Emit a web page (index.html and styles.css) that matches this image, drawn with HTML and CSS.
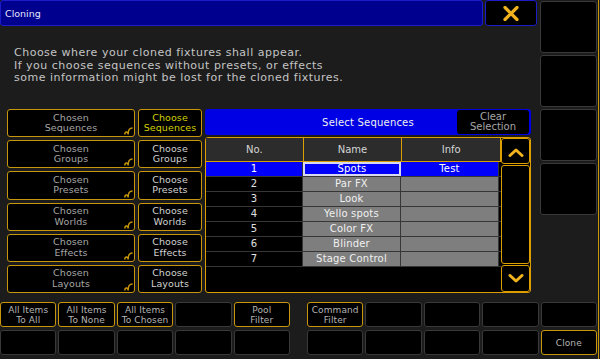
FILE: index.html
```html
<!DOCTYPE html>
<html lang="en">
<head>
  <meta charset="UTF-8">
  <title>Cloning</title>
  <link rel="stylesheet" href="styles.css">
</head>
<body>
  <div class="screen">
    <div class="top">
      <div class="main">
        <!-- Title bar -->
        <div class="titlebar">
          <div class="title">Cloning</div>
          <div class="close">
            <svg width="16" height="15" viewBox="0 0 16 15">
              <path d="M2 1.5 L14 13.5 M14 1.5 L2 13.5" stroke="#f0b21e" stroke-width="3.2" stroke-linecap="round"/>
            </svg>
          </div>
        </div>

        <p class="intro">
          Choose where your cloned fixtures shall appear.<br>
          If you choose sequences without presets, or effects<br>
          some information might be lost for the cloned fixtures.
        </p>

        <div class="content">
          <div class="sources">
            <div class="src-row">
              <div class="chosen">Chosen<br>Sequences<svg class="curl" width="9" height="8" viewBox="0 0 9 8"><path d="M0.8 7.6 C0.8 4.4 3.8 4.2 4.1 7 M4.1 7.6 C4.1 3 5.2 1 8.6 1" fill="none" stroke="#c8960c" stroke-width="1.5"/></svg></div>
              <div class="choose active">Choose<br>Sequences</div>
            </div>
            <div class="src-row">
              <div class="chosen">Chosen<br>Groups<svg class="curl" width="9" height="8" viewBox="0 0 9 8"><path d="M0.8 7.6 C0.8 4.4 3.8 4.2 4.1 7 M4.1 7.6 C4.1 3 5.2 1 8.6 1" fill="none" stroke="#c8960c" stroke-width="1.5"/></svg></div>
              <div class="choose">Choose<br>Groups</div>
            </div>
            <div class="src-row">
              <div class="chosen">Chosen<br>Presets<svg class="curl" width="9" height="8" viewBox="0 0 9 8"><path d="M0.8 7.6 C0.8 4.4 3.8 4.2 4.1 7 M4.1 7.6 C4.1 3 5.2 1 8.6 1" fill="none" stroke="#c8960c" stroke-width="1.5"/></svg></div>
              <div class="choose">Choose<br>Presets</div>
            </div>
            <div class="src-row">
              <div class="chosen">Chosen<br>Worlds<svg class="curl" width="9" height="8" viewBox="0 0 9 8"><path d="M0.8 7.6 C0.8 4.4 3.8 4.2 4.1 7 M4.1 7.6 C4.1 3 5.2 1 8.6 1" fill="none" stroke="#c8960c" stroke-width="1.5"/></svg></div>
              <div class="choose">Choose<br>Worlds</div>
            </div>
            <div class="src-row">
              <div class="chosen">Chosen<br>Effects<svg class="curl" width="9" height="8" viewBox="0 0 9 8"><path d="M0.8 7.6 C0.8 4.4 3.8 4.2 4.1 7 M4.1 7.6 C4.1 3 5.2 1 8.6 1" fill="none" stroke="#c8960c" stroke-width="1.5"/></svg></div>
              <div class="choose">Choose<br>Effects</div>
            </div>
            <div class="src-row">
              <div class="chosen">Chosen<br>Layouts<svg class="curl" width="9" height="8" viewBox="0 0 9 8"><path d="M0.8 7.6 C0.8 4.4 3.8 4.2 4.1 7 M4.1 7.6 C4.1 3 5.2 1 8.6 1" fill="none" stroke="#c8960c" stroke-width="1.5"/></svg></div>
              <div class="choose">Choose<br>Layouts</div>
            </div>
          </div>

          <div class="panel">
            <div class="panel-head">
              <span class="panel-title">Select Sequences</span>
              <div class="clear">Clear<br>Selection</div>
            </div>
            <div class="frame">
              <div class="grid">
                <div class="thead">
                  <div class="th">No.</div>
                  <div class="th">Name</div>
                  <div class="th">Info</div>
                </div>
                <div class="tbody">
                  <div class="tr selected">
                    <div class="td no">1</div>
                    <div class="td name">Spots</div>
                    <div class="td info">Test</div>
                  </div>
                  <div class="tr">
                    <div class="td no">2</div>
                    <div class="td name">Par FX</div>
                    <div class="td info"></div>
                  </div>
                  <div class="tr">
                    <div class="td no">3</div>
                    <div class="td name">Look</div>
                    <div class="td info"></div>
                  </div>
                  <div class="tr">
                    <div class="td no">4</div>
                    <div class="td name">Yello spots</div>
                    <div class="td info"></div>
                  </div>
                  <div class="tr">
                    <div class="td no">5</div>
                    <div class="td name">Color FX</div>
                    <div class="td info"></div>
                  </div>
                  <div class="tr">
                    <div class="td no">6</div>
                    <div class="td name">Blinder</div>
                    <div class="td info"></div>
                  </div>
                  <div class="tr">
                    <div class="td no">7</div>
                    <div class="td name">Stage Control</div>
                    <div class="td info"></div>
                  </div>
                </div>
              </div>
              <div class="scroll">
                <div class="scroll-btn up">
                  <svg width="16" height="9" viewBox="0 0 16 9"><path d="M2 7.5 L8 2 L14 7.5" fill="none" stroke="#f0b21e" stroke-width="3" stroke-linecap="round" stroke-linejoin="round"/></svg>
                </div>
                <div class="scroll-track"></div>
                <div class="scroll-btn down">
                  <svg width="16" height="9" viewBox="0 0 16 9"><path d="M2 1.5 L8 7 L14 1.5" fill="none" stroke="#f0b21e" stroke-width="3" stroke-linecap="round" stroke-linejoin="round"/></svg>
                </div>
              </div>
            </div>
          </div>
        </div>
      </div>

      <!-- Right key column -->
      <div class="side">
        <div class="key"></div>
        <div class="key"></div>
        <div class="key"></div>
        <div class="key"></div>
      </div>
    </div>

    <!-- Bottom keys -->
    <div class="bottom">
      <div class="keys">
        <div class="key on">All Items<br>To All</div>
        <div class="key on">All Items<br>To None</div>
        <div class="key on">All Items<br>To Chosen</div>
        <div class="key"></div>
        <div class="key on">Pool<br>Filter</div>
        <div class="key"></div>
        <div class="key"></div>
        <div class="key"></div>
        <div class="key"></div>
        <div class="key"></div>
      </div>
      <div class="keys">
        <div class="key on">Command<br>Filter</div>
        <div class="key"></div>
        <div class="key"></div>
        <div class="key"></div>
        <div class="key"></div>
        <div class="key"></div>
        <div class="key"></div>
        <div class="key"></div>
        <div class="key"></div>
        <div class="key on">Clone</div>
      </div>
    </div>
  </div>
</body>
</html>
```

FILE: styles.css
```css
body {
  margin: 0;
  background-color: #1c1c1c;
  font-family: "DejaVu Sans", Verdana, sans-serif;
  overflow: hidden;
}

.screen {
  width: 598px;
  height: 359px;
  border-right: 1px solid #c8960c;
  box-sizing: content-box;
}

.top {
  height: 300px;
  display: flex;
  gap: 2px;
}

.main {
  width: 538px;
}

/* title bar */
.titlebar {
  height: 26px;
  display: flex;
  gap: 2px;
}

.title {
  width: 483px;
  box-sizing: border-box;
  background: #00008e;
  border: 1px solid #1c1cc8;
  border-radius: 3px;
  color: #e6e6ff;
  font-size: 9.5px;
  line-height: 25px;
  padding-left: 4px;
}

.close {
  width: 52px;
  box-sizing: border-box;
  background: #000;
  border: 1px solid #1c1cc8;
  border-radius: 3px;
  display: flex;
  justify-content: center;
  align-items: center;
}

.intro {
  margin: 0;
  height: 83px;
  box-sizing: border-box;
  padding: 21px 0 0 14px;
  color: #c4c4c4;
  font-size: 11px;
  line-height: 12.5px;
  letter-spacing: 0.5px;
}

/* content area */
.content {
  height: 184px;
  padding-left: 7px;
  display: flex;
  gap: 3px;
}

.sources {
  width: 195px;
  display: flex;
  flex-direction: column;
  gap: 3px;
}

.src-row {
  flex: 1;
  display: flex;
  gap: 3px;
}

.chosen, .choose {
  box-sizing: border-box;
  background: #000;
  border: 1px solid #c8960c;
  border-radius: 3px;
  display: flex;
  justify-content: center;
  align-items: center;
  text-align: center;
  font-size: 9.5px;
  line-height: 10.5px;
  letter-spacing: 0.1px;
}

.chosen {
  width: 128px;
  color: #a6a6a6;
  position: relative;
}

.chosen .curl {
  position: absolute;
  right: 1px;
  bottom: 1px;
}

.choose {
  width: 64px;
  color: #d2d2d2;
}

.choose.active {
  color: #d0d000;
}

/* sequence panel */
.panel {
  width: 326px;
  display: flex;
  flex-direction: column;
  gap: 2px;
}

.panel-head {
  height: 26px;
  box-sizing: border-box;
  background: #0000e4;
  border-radius: 3px;
  display: flex;
  align-items: center;
  padding: 1px 2px 1px 0;
}

.panel-title {
  flex: 1;
  padding-left: 74px;
  text-align: center;
  color: #f0f0f0;
  font-size: 10px;
  letter-spacing: 0.2px;
}

.clear {
  width: 72px;
  height: 24px;
  background: #000;
  border-radius: 3px;
  color: #a6a6a6;
  font-size: 10px;
  line-height: 10.5px;
  text-align: center;
  display: flex;
  justify-content: center;
  align-items: center;
}

.frame {
  flex: 1;
  box-sizing: border-box;
  border: 1px solid #dc9e00;
  border-radius: 3px;
  background: #000;
  display: flex;
}

.grid {
  width: 295px;
  display: flex;
  flex-direction: column;
}

.thead {
  display: flex;
  height: 24px;
  border-bottom: 1px solid #dc9e00;
  box-sizing: border-box;
}

.th {
  width: 98px;
  background: #2c2c2c;
  border-right: 1px solid #dc9e00;
  color: #d6d6d6;
  font-size: 10px;
  line-height: 24px;
  text-align: center;
}

.th:first-child {
  width: 97px;
}

.tr {
  display: flex;
  height: 15px;
  box-sizing: border-box;
  border-bottom: 1px solid #363636;
}

.td {
  width: 98px;
  box-sizing: border-box;
  border-right: 1px solid #363636;
  font-size: 10px;
  line-height: 14px;
  text-align: center;
  color: #f0f0f0;
  letter-spacing: 0.2px;
}

.td.no {
  width: 97px;
  background: #000;
  color: #e0e0e0;
}

.td.name, .td.info {
  background: #7e7e7e;
}

.tr.selected .td {
  background: #0000fa;
  color: #fff;
}

.tr.selected .td.name {
  border: 2px solid #d8d8f0;
  line-height: 10px;
}

.scroll {
  width: 29px;
  display: flex;
  flex-direction: column;
  gap: 1px;
}

.scroll-btn, .scroll-track {
  box-sizing: border-box;
  border: 1px solid #dc9e00;
  border-radius: 3px;
  background: #000;
}

.scroll-btn {
  display: flex;
  justify-content: center;
  align-items: center;
}

.scroll-btn.up {
  height: 26px;
  padding-top: 3px;
}

.scroll-btn.down {
  height: 27px;
}

.scroll-track {
  flex: 1;
}

/* keys */
.side {
  width: 57px;
  padding-top: 1px;
  display: flex;
  flex-direction: column;
  gap: 2px;
}

.key {
  box-sizing: border-box;
  background: #000;
  border: 1px solid #393939;
  border-radius: 3px;
  color: #b4b4b4;
  font-size: 9px;
  line-height: 10px;
  letter-spacing: 0.1px;
  text-align: center;
  display: flex;
  justify-content: center;
  align-items: center;
}

.side .key {
  height: 52px;
}

.key.on {
  border-color: #c8960c;
}

.bottom {
  margin-top: 2px;
  display: flex;
  gap: 17px;
}

.keys {
  width: 290px;
  display: grid;
  grid-template-columns: repeat(5, 1fr);
  grid-template-rows: 25px 25px;
  gap: 3px 2px;
}
```
